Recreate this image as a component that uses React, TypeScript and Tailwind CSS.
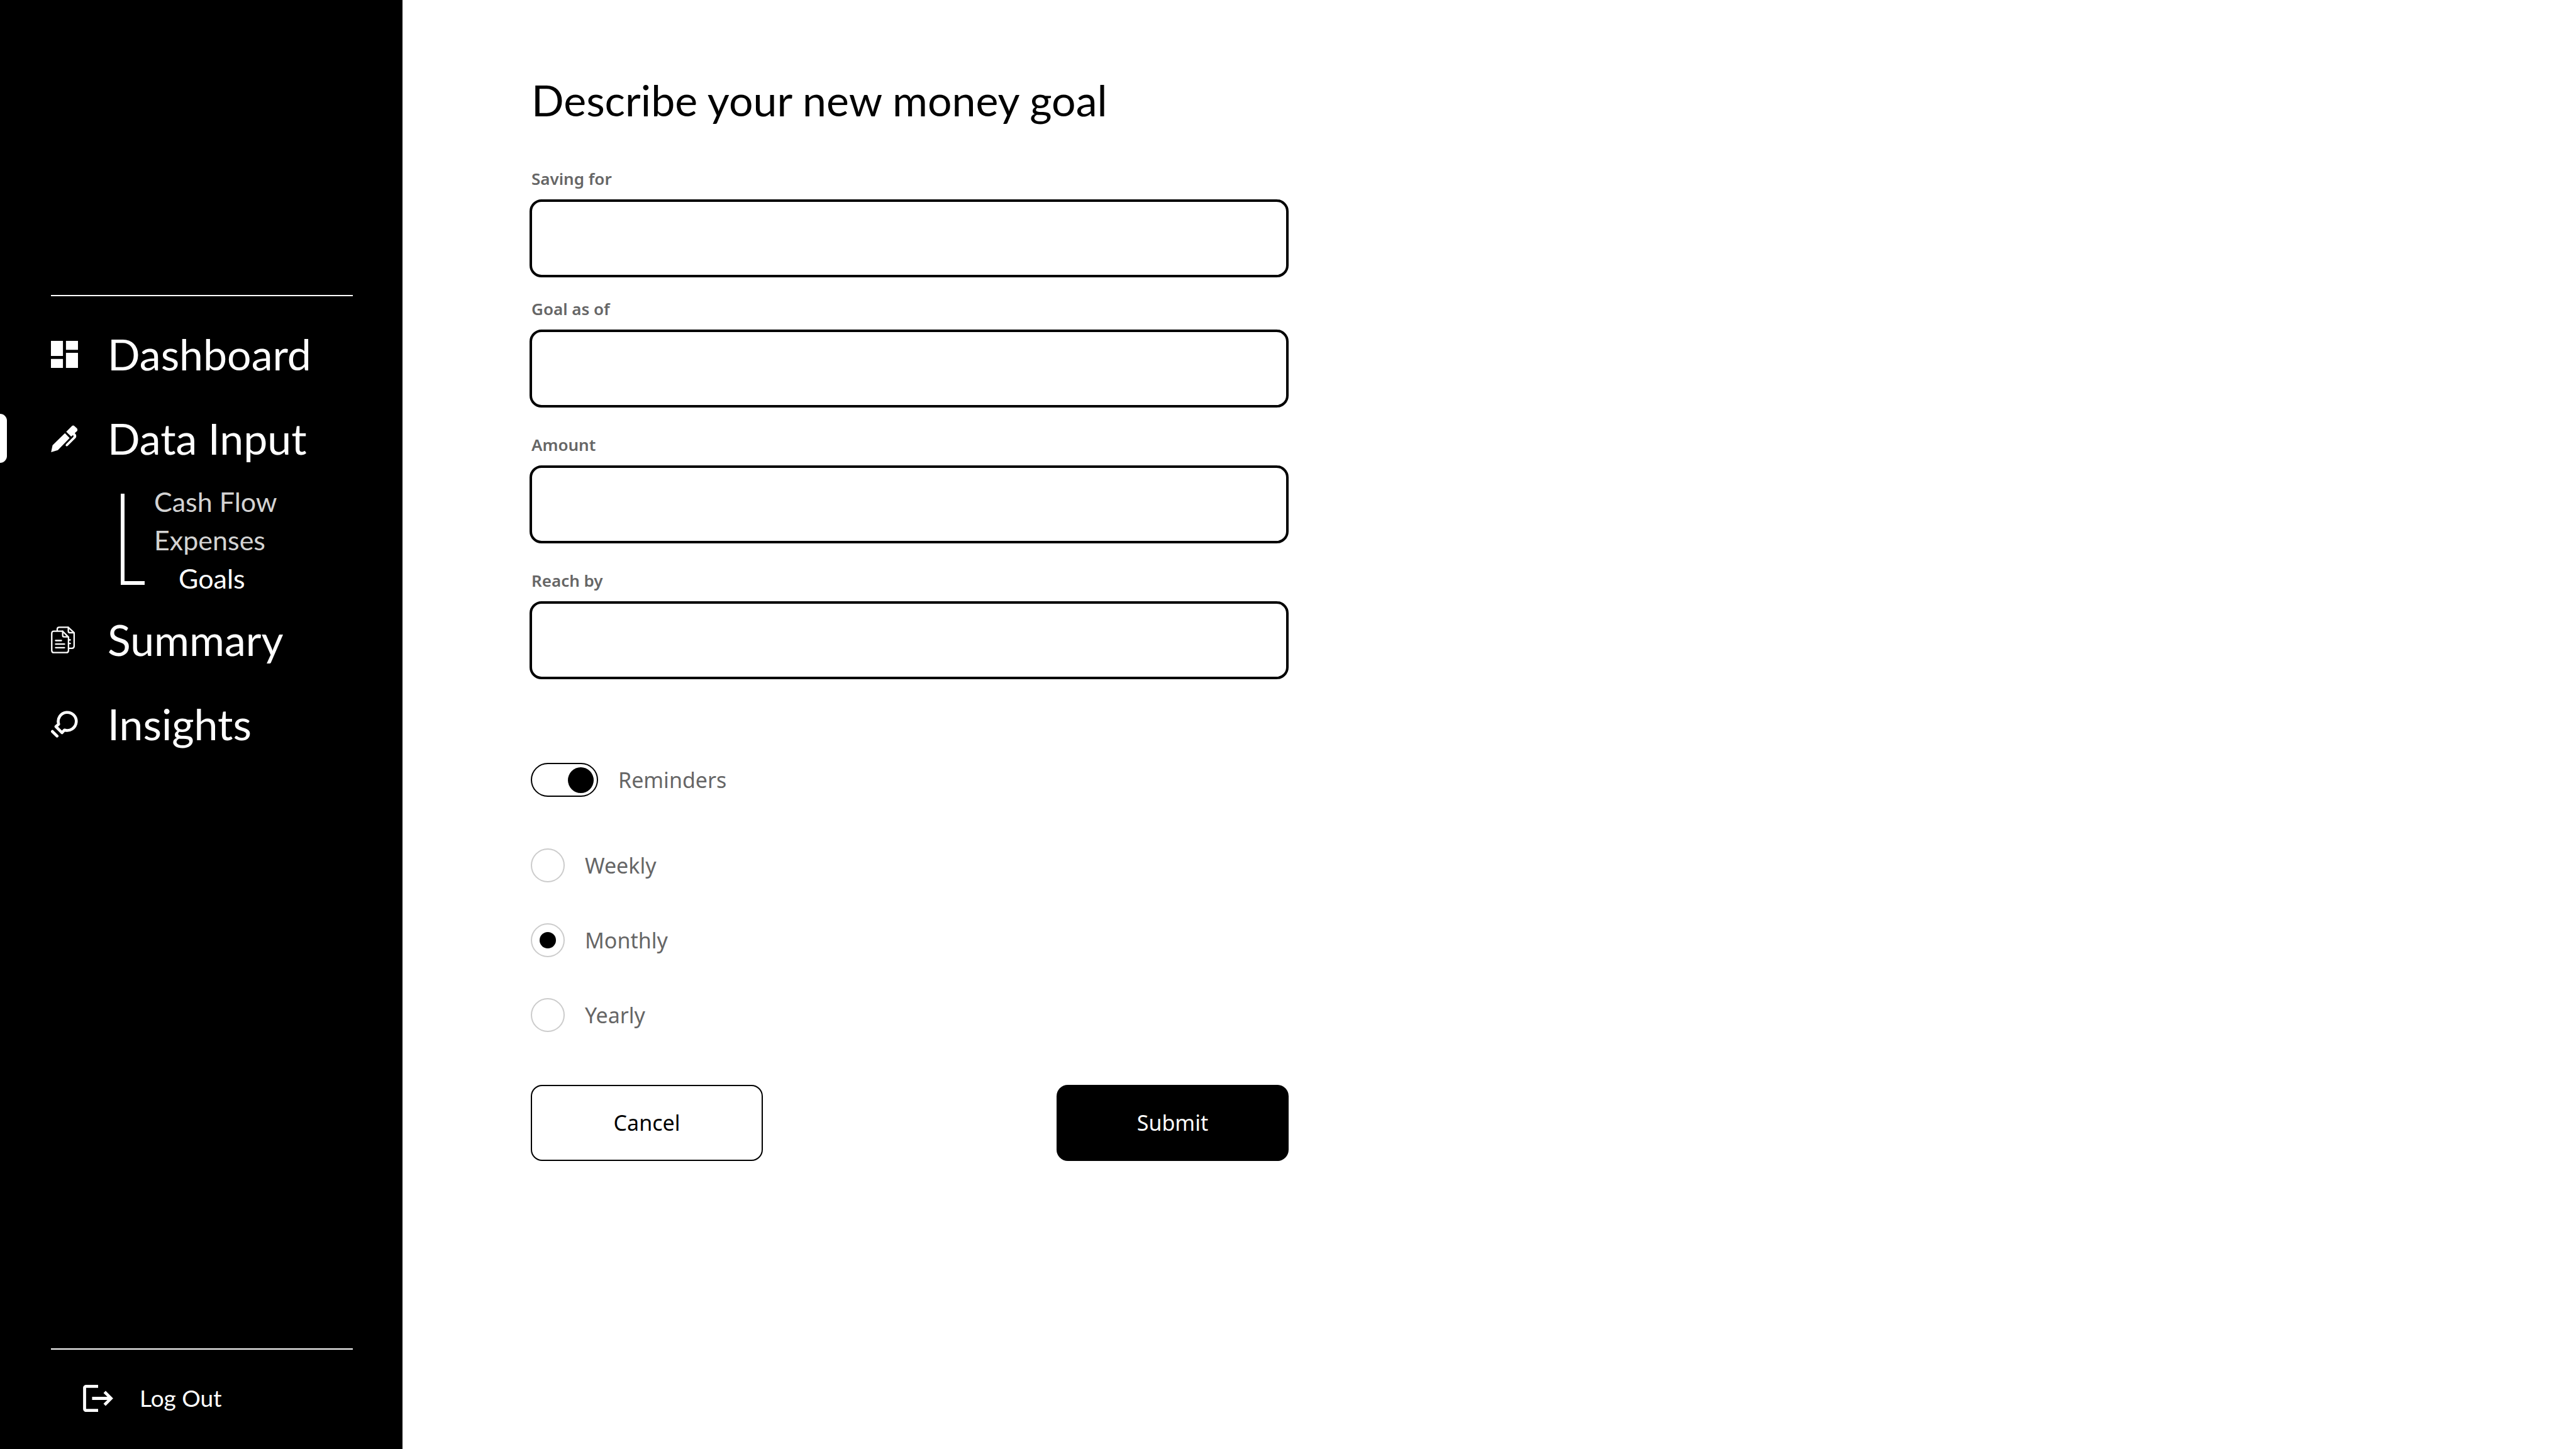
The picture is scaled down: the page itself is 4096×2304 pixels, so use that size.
import { useState } from "react";
import type { ReactNode } from "react";

function DashboardIcon() {
  return (
    <svg viewBox="3 3 18 18" className="size-[43px]" fill="currentColor" aria-hidden="true">
      <path d="M3 13h8V3H3v10zm0 8h8v-6H3v6zm10 0h8V11h-8v10zm0-18v6h8V3h-8z" />
    </svg>
  );
}

function PenIcon() {
  return (
    <svg viewBox="0 0 168 168" className="size-[43px]" fill="currentColor" aria-hidden="true">
      <path d="M1 168 L10 125 L87 50 L116 80 L43 155 Z" />
      <path d="M95 41 L131 5 Q138 -2 145 5 L161 20 Q167 27 163 36 L148 50 Q162 62 155 78 L104 129 Q97 134 92 128 Q90 122 95 117 L139 73 Q142 68 137 62 L126 71 Z" />
    </svg>
  );
}

function SummaryIcon() {
  return (
    <svg
      viewBox="0 0 168 168"
      className="size-[43px]"
      fill="none"
      stroke="currentColor"
      strokeWidth="9"
      strokeLinecap="round"
      strokeLinejoin="round"
      aria-hidden="true"
    >
      <path d="M73 30 H18 Q5 30 5 44 V149 Q5 163 18 163 H95 Q109 163 109 149 V67 Z" />
      <path d="M73 30 V57 Q73 65 81 65 H107" />
      <path d="M39 26 V18 Q39 5 52 5 H107 L144 39 V122 Q144 136 130 136 H113" />
      <path d="M108 6 V30 Q108 39 116 39 H142" />
      <path d="M29 88 H65 M29 110 H84 M29 132 H84 M113 84 H120 M113 106 H120" />
    </svg>
  );
}

function InsightsIcon() {
  return (
    <svg
      viewBox="0 0 168 168"
      className="size-[43px]"
      fill="none"
      stroke="currentColor"
      strokeWidth="18"
      strokeLinejoin="round"
      aria-hidden="true"
    >
      <path d="M69 137 L31 99 L48 84 A56 56 0 1 1 84 120 Z" />
      <path d="M9 129 L38 158" strokeLinecap="round" />
    </svg>
  );
}

function LogOutIcon() {
  return (
    <svg viewBox="2 3 20 18" className="h-[43px] w-[48px]" fill="currentColor" aria-hidden="true">
      <path d="M17 7l-1.41 1.41L18.17 11H8v2h10.17l-2.58 2.58L17 17l5-5zM4 5h8V3H4c-1.1 0-2 .9-2 2v14c0 1.1.9 2 2 2h8v-2H4V5z" />
    </svg>
  );
}

function NavItem({ icon, label, active = false }: { icon: ReactNode; label: string; active?: boolean }) {
  return (
    <a
      href="#"
      aria-current={active ? "page" : undefined}
      className="relative flex h-[134px] items-center gap-[47px] pl-[81px] text-[68px] leading-[78px]"
    >
      {active && <span className="absolute inset-y-[28px] left-0 w-[11px] rounded-r-[11px] bg-white" />}
      {icon}
      {label}
    </a>
  );
}

function Sidebar() {
  return (
    <aside className="flex w-[640px] shrink-0 flex-col bg-black font-['Lato',sans-serif] text-white">
      <hr className="mt-[469px] mr-[79px] ml-[81px] border-t-2 border-white" />
      <nav className="mt-[25px] flex flex-col">
        <NavItem icon={<DashboardIcon />} label="Dashboard" />
        <NavItem icon={<PenIcon />} label="Data Input" active />
        <div className="ml-[192px] flex gap-[15px] text-[43px] leading-[61px]">
          <span className="mt-[21px] h-[145px] w-[38px] border-b-[6px] border-l-[6px] border-white" />
          <div className="flex flex-col pt-[3px] text-[#d3d3d3]">
            <a href="#">Cash Flow</a>
            <a href="#">Expenses</a>
            <a href="#" className="pl-[39px] text-white">Goals</a>
          </div>
        </div>
        <NavItem icon={<SummaryIcon />} label="Summary" />
        <NavItem icon={<InsightsIcon />} label="Insights" />
      </nav>
      <div className="mt-auto pb-[58px]">
        <hr className="mr-[79px] ml-[81px] border-t-2 border-white" />
        <a href="#" className="mt-[54px] ml-[132px] flex items-center gap-[42px] text-[37px] leading-[46px]">
          <LogOutIcon />
          Log Out
        </a>
      </div>
    </aside>
  );
}

function Field({ id, label }: { id: string; label: string }) {
  return (
    <div className="flex flex-col gap-[15px]">
      <label htmlFor={id} className="pl-[3px] text-[26px] leading-[36px] font-semibold text-[#666666]">
        {label}
      </label>
      <input
        id={id}
        type="text"
        className="h-[124px] w-full rounded-[19px] border-4 border-black px-[30px] text-[34px] outline-none"
      />
    </div>
  );
}

export default function App() {
  const [reminders, setReminders] = useState(true);
  const [period, setPeriod] = useState("Monthly");

  return (
    <div className="flex min-h-screen bg-white">
      <Sidebar />
      <main className="flex-1 px-[202px] pt-[118px] font-['Noto_Sans',sans-serif]">
        <form className="flex w-full max-w-[1207px] flex-col" onSubmit={(e) => e.preventDefault()}>
          <h1 className="pl-[3px] font-['Lato',sans-serif] text-[68px] leading-[82px] text-black">
            Describe your new money goal
          </h1>

          <div className="mt-[66px] flex flex-col gap-[41px]">
            <div className="flex flex-col gap-[32px]">
              <Field id="saving-for" label="Saving for" />
              <Field id="goal-as-of" label="Goal as of" />
            </div>
            <Field id="amount" label="Amount" />
            <Field id="reach-by" label="Reach by" />
          </div>

          <label className="mt-[133px] ml-[2px] flex items-center gap-[32px] self-start text-[34px] leading-[54px] text-[#666666]">
            <input
              type="checkbox"
              role="switch"
              checked={reminders}
              onChange={(e) => setReminders(e.target.checked)}
              className="flex h-[54px] w-[107px] appearance-none items-center rounded-full border-2 border-black px-[5px] before:size-[41px] before:rounded-full before:bg-black before:content-[''] checked:justify-end"
            />
            Reminders
          </label>

          <fieldset className="mt-[82px] ml-[2px] flex flex-col items-start gap-[65px]">
            {["Weekly", "Monthly", "Yearly"].map((option) => (
              <label key={option} className="flex items-center gap-[32px] text-[34px] leading-[54px] text-[#666666]">
                <input
                  type="radio"
                  name="period"
                  value={option}
                  checked={period === option}
                  onChange={() => setPeriod(option)}
                  className="flex size-[54px] appearance-none items-center justify-center rounded-full border-2 border-[#cccccc] before:size-[26px] before:rounded-full before:content-[''] checked:before:bg-black"
                />
                {option}
              </label>
            ))}
          </fieldset>

          <div className="mt-[84px] mb-[60px] ml-[2px] flex justify-between gap-[40px] text-[34px]">
            <button type="button" className="h-[121px] w-[369px] rounded-[18px] border-2 border-black text-black">
              Cancel
            </button>
            <button type="submit" className="h-[121px] w-[369px] rounded-[18px] bg-black text-white">
              Submit
            </button>
          </div>
        </form>
      </main>
    </div>
  );
}
